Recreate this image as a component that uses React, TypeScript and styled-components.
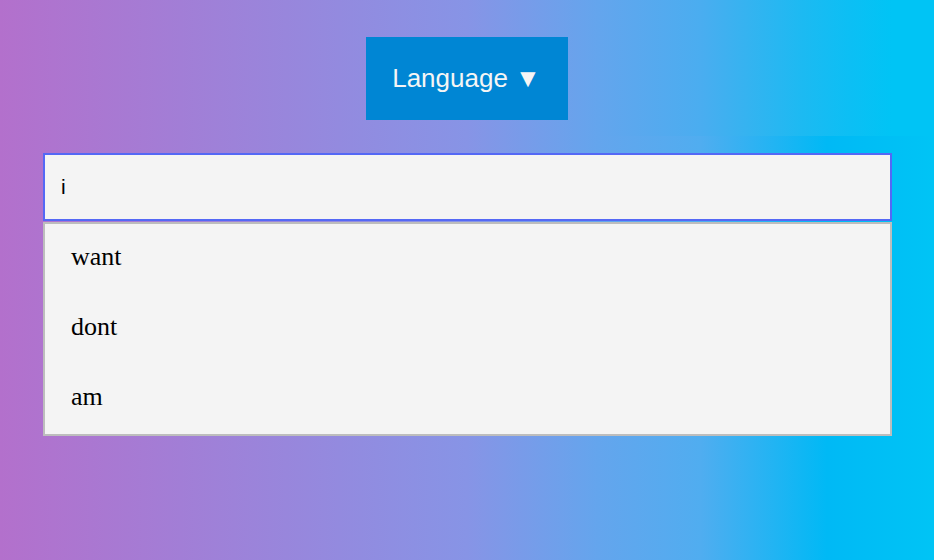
import React from "react";
import styled, { createGlobalStyle } from "styled-components";

const GlobalStyle = createGlobalStyle`
  html, body {
    margin: 0;
    padding: 0;
  }
  body {
    font-family: "Liberation Serif", serif;
  }
  * { box-sizing: border-box; }
`;

const Page = styled.div`
  min-height: 100vh;
  display: flex;
  flex-direction: column;
  background: linear-gradient(
    90deg,
    #b370cc 0%,
    #8794e6 50%,
    #64a5ed 64%,
    #50adf0 75%,
    #00b9f5 88.5%,
    #00c4f5 100%
  );
`;

const Header = styled.header`
  height: 136px;
  display: flex;
  justify-content: center;
  align-items: flex-start;
  padding-top: 37px;
  background: linear-gradient(
    90deg,
    #b370cc 0%,
    #8794e6 50%,
    #64a5ed 64%,
    #4aadf0 75%,
    #35b3f0 80%,
    #1cbaf2 86%,
    #0cbff4 91%,
    #00c4f5 95.5%,
    #00c4f5 100%
  );
`;

const LanguageButton = styled.button`
  height: 83px;
  padding: 0 27px 0 26px;
  border: none;
  border-radius: 0;
  background: #0086d4;
  color: #f5f5f5;
  font-family: "Liberation Sans", Arial, sans-serif;
  font-size: 26px;
  cursor: pointer;
`;

const Main = styled.main`
  padding: 17px 42px 0 43px;
  display: flex;
  flex-direction: column;
`;

const SearchInput = styled.input`
  height: 68px;
  width: 100%;
  padding: 0 16px;
  border: 2px solid #5468f5;
  background: #f4f4f4;
  font-family: "Liberation Sans", Arial, sans-serif;
  font-size: 21px;
  color: #000;
  outline: none;
`;

const Suggestions = styled.ul`
  list-style: none;
  margin: 1px 0 0;
  padding: 0;
  border: 2px solid #bdbdbd;
  background: #f4f4f4;
`;

const Suggestion = styled.li`
  height: 70px;
  display: flex;
  align-items: center;
  padding: 0 26px 4px;
  font-family: "Liberation Serif", "Times New Roman", serif;
  font-size: 26px;
  color: #000;
`;

export default function App() {
  const words = ["want", "dont", "am"];
  return (
    <>
      <GlobalStyle />
      <Page>
        <Header>
          <LanguageButton>Language ▼</LanguageButton>
        </Header>
        <Main>
          <SearchInput defaultValue="i" />
          <Suggestions>
            {words.map((w) => (
              <Suggestion key={w}>{w}</Suggestion>
            ))}
          </Suggestions>
        </Main>
      </Page>
    </>
  );
}
